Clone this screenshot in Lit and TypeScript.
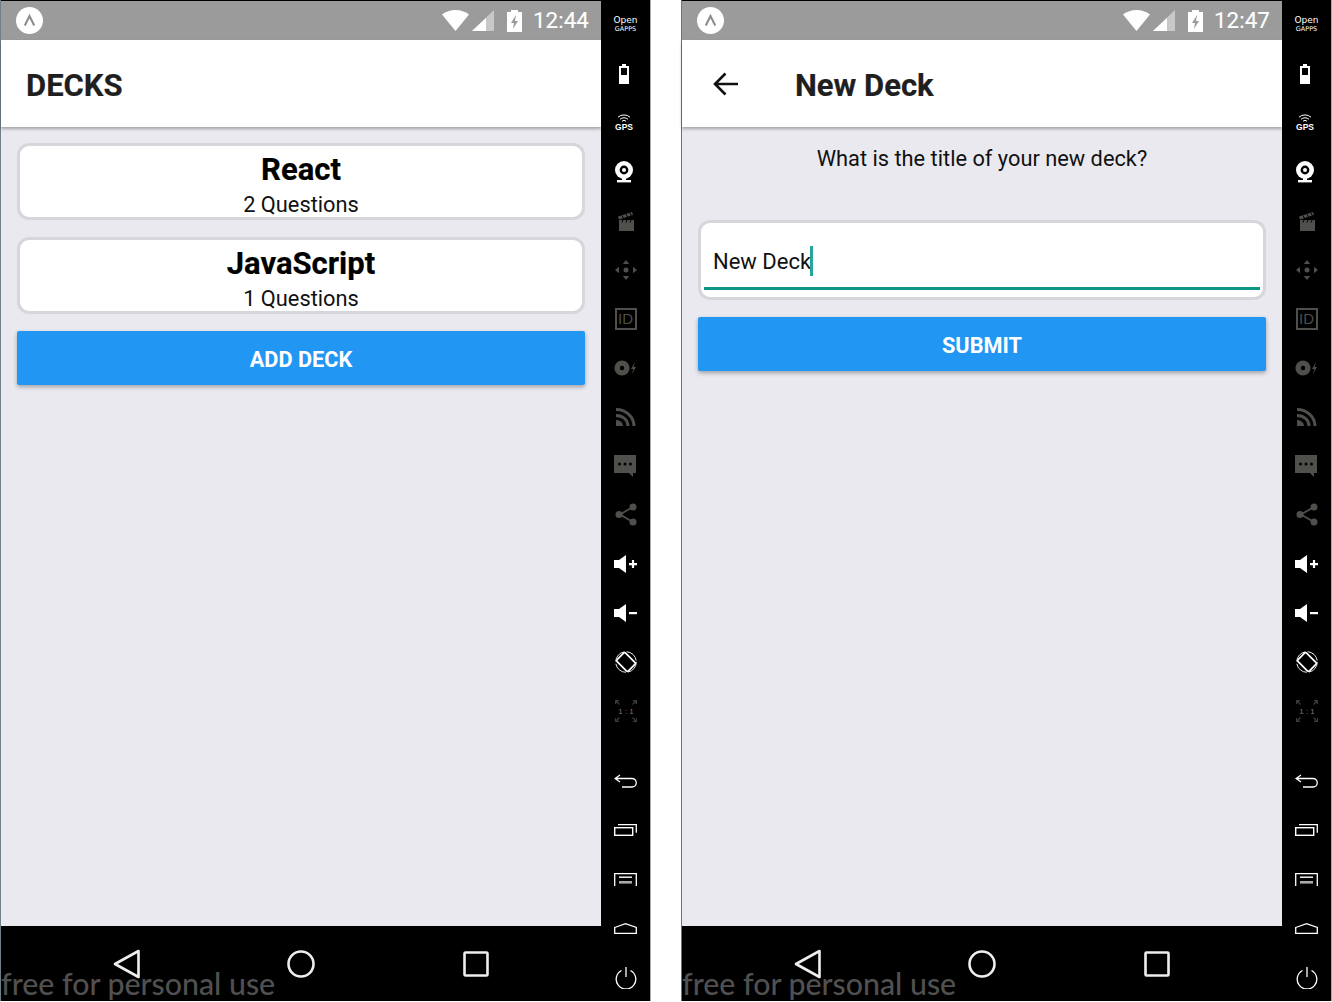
import { LitElement, html, css, svg } from "lit";
import { customElement } from "lit/decorators.js";

const W = "#fff";
const D = "#4f4f4b";

const ic = (w: number, h: number, body: unknown) =>
  html`<svg width=${w} height=${h} viewBox="0 0 ${w} ${h}">${body}</svg>`;

const topIcons = [
  html`<div class="og"><span>Open</span><span class="g">GAPPS</span></div>`,
  html`<div class="shift">${ic(12, 20, svg`<path d="M4 0h4v2h3v18H1V2h3z" fill="${W}"/><rect x="3" y="4" width="6" height="7" fill="#000"/>`)}</div>`,
  html`<div class="gps">${ic(14, 9, svg`<g fill="none" stroke="${W}" stroke-width="1"><path d="M1 3.200a9 9 0 0 1 12 0"/><path d="M3 5.300a6 6 0 0 1 8 0"/><path d="M5 7.200a3 3 0 0 1 4 0"/></g>`)}<span>GPS</span></div>`,
  html`<div class="shift">${ic(20, 22, svg`<circle cx="10" cy="9" r="9" fill="${W}"/><circle cx="10" cy="9" r="4.400" fill="#000"/><circle cx="10" cy="9" r="2" fill="${W}"/><rect x="3" y="19" width="14" height="2.400" fill="${W}"/><rect x="8" y="17" width="4" height="3" fill="${W}"/>`)}</div>`,
  ic(18, 20, svg`<path d="M2 9h15v11H2z" fill="${D}"/><path d="M1 5.500L15 1l1 3L2 8.500z" fill="${D}"/><path d="M5 4.500l1.500 3M9 3.200l1.500 3M13 2l1.500 3M6 9l-1 2.500M10 9l-1 2.500M14 9l-1 2.500" stroke="#000" stroke-width="1"/>`),
  ic(24, 22, svg`<g fill="${D}"><circle cx="12" cy="11" r="2.500"/><path d="M12 1l3.200 4h-6.400zM12 21l3.200-4h-6.400zM1 11l4-3.200v6.400zM23 11l-4-3.200v6.400z"/></g>`),
  html`<div class="id">ID</div>`,
  ic(24, 16, svg`<circle cx="8" cy="8" r="7.600" fill="${D}"/><circle cx="8" cy="8" r="2.200" fill="#000"/><path d="M21 2l-4 7h2.400L18 14l4-7h-2.400z" fill="${D}"/>`),
  ic(20, 20, svg`<g fill="none" stroke="${D}" stroke-width="3"><path d="M0 2.500C10 2.500 18 10 18 19"/><path d="M0 8.500C7 8.500 12 13 12 19"/></g><path d="M0 13c3.500 0 7 2.500 7 6H0z" fill="${D}"/>`),
  html`<div class="down">${ic(23, 23, svg`<path d="M0 0h22v18h-3v4l-4-4H0z" fill="${D}"/><g fill="#000"><circle cx="5.500" cy="9" r="1.500"/><circle cx="11" cy="9" r="1.500"/><circle cx="16.500" cy="9" r="1.500"/></g>`)}</div>`,
  ic(22, 23, svg`<path d="M17 4.500L5 11.500L17 18.500" fill="none" stroke="${D}" stroke-width="1.800"/><circle cx="18" cy="4" r="3.500" fill="${D}"/><circle cx="4" cy="11.500" r="3.500" fill="${D}"/><circle cx="18" cy="19" r="3.500" fill="${D}"/>`),
  ic(24, 18, svg`<path d="M0 5h5l7-5v18l-7-5H0z" fill="${W}"/><path d="M15 8h8v2.200h-8z M17.900 5h2.200v8h-2.200z" fill="${W}"/>`),
  ic(24, 18, svg`<path d="M0 5h5l7-5v18l-7-5H0z" fill="${W}"/><path d="M15 8h8v2.200h-8z" fill="${W}"/>`),
  ic(22, 22, svg`<g fill="none" stroke="${W}"><circle cx="11" cy="11" r="10.300" stroke-width=".9" stroke-dasharray="14 2.300 14 2.300"/><rect x="3" y="5" width="16" height="12" rx="1.500" stroke-width="1.700" transform="rotate(45 11 11)"/></g>`),
  ic(22, 22, svg`<g fill="none" stroke="#3a3a38" stroke-width="1.300"><path d="M.5 4V.5H4M.5.5l4 4M21.500 4V.5H18M21.500.5l-4 4M.5 18v3.500H4M.5 21.500l4-4M21.500 18v3.500H18M21.500 21.500l-4-4"/></g><text x="11" y="14" font-size="8" fill="#777" text-anchor="middle" font-family="Liberation Sans">1 : 1</text>`),
];

const bottomIcons = [
  ic(23, 14, svg`<path d="M6 1L1 4.500L6 8M1 4.500h17a4 4 0 0 1 0 8.500H8" fill="none" stroke="${W}" stroke-width="1.300"/>`),
  ic(23, 12, svg`<path d="M4 .7h18.300v8" fill="none" stroke="${W}" stroke-width="1.300"/><rect x=".7" y="3.700" width="18" height="7.600" fill="none" stroke="${W}" stroke-width="1.400"/>`),
  ic(23, 13, svg`<path d="M.7 13V.7h21.600V13" fill="none" stroke="${W}" stroke-width="1.300"/><rect x="5" y="3.500" width="13" height="1.400" fill="${W}"/><rect x="5" y="8" width="13" height="2.600" fill="#aaa"/>`),
  ic(23, 11, svg`<path d="M.7 4.500L11.500.7l10.800 3.800V10.300H.7z" fill="none" stroke="${W}" stroke-width="1.300"/>`),
  ic(22, 22, svg`<path d="M6.500 3.500a9.800 9.800 0 1 0 9 0M11 0v10" fill="none" stroke="${W}" stroke-width="1.300"/>`),
];

@customElement("app-root")
export class AppRoot extends LitElement {
  static styles = css`
    :host {
      display: block;
      width: 1332px;
      height: 1002px;
      background: #fff;
      font-family: Roboto, sans-serif;
      color: #000;
      overflow: hidden;
    }
    .page { display: flex; gap: 30px; align-items: flex-start; }
    .phone {
      height: 1001px;
      display: flex;
      background: #000;
      flex: none;
      border-left: 1px solid #6f8088;
      border-right: 1px solid #a5aaa8;
      box-sizing: border-box;
      width: 651px;
      position: relative;
    }
    .phone.alt { border-left-color: #3d7ebf; }
    .screen { width: 600px; display: flex; flex-direction: column; height: 1001px; flex: none; }
    .status {
      height: 39px;
      margin-top: 1px;
      background: #9b9b9b;
      display: flex;
      align-items: center;
      padding: 0 12px 0 15px;
      flex: none;
    }
    .expo {
      width: 27px; height: 27px; border-radius: 50%; background: #fff;
      display: flex; align-items: center; justify-content: center;
    }
    .spacer { flex: 1; }
    .status span { display: flex; }
    .wifi { margin-right: 3px; }
    .cell { margin-right: 13px; }
    .batt { margin-right: 11px; }
    .status .time { font-size: 22.300px; color: #fff; line-height: 39px; letter-spacing: .1px; -webkit-text-stroke: .15px #fff; }
    .header {
      height: 87px;
      background: #fff;
      display: flex;
      align-items: center;
      flex: none;
      box-shadow: 0 2px 3px rgba(0,0,0,.3);
      position: relative;
      z-index: 1;
      padding-left: 25px;
      box-sizing: border-box;
    }
    .title { font-size: 31px; font-weight: 700; color: #1f1f1f; margin-top: 3px; -webkit-text-stroke: .2px #1f1f1f; }
    .arrow { margin-left: 6px; margin-right: 56px; display: block; margin-top: 1px; }
    .arrow svg { display: block; }
    .content {
      flex: 1;
      background: #e9e9ef;
      padding: 16px 15px 0 15px;
      display: flex;
      flex-direction: column;
    }
    .card {
      height: 77px;
      margin: 0 1px 17px;
      box-sizing: border-box;
      border: 3px solid #d6d7da;
      border-radius: 12px;
      background: #fff;
      display: flex;
      flex-direction: column;
      align-items: center;
      padding-top: 7px;
    }
    .card h2 { margin: 0; font-size: 31px; font-weight: 700; line-height: 34px; -webkit-text-stroke: .2px #000; }
    .card p { margin: 7px 0 0; font-size: 21.800px; line-height: 22px; color: #111; }
    .btn {
      height: 54px;
      margin: 0 1px;
      background: #2196f3;
      border-radius: 2px;
      box-shadow: 0 2px 4px rgba(0,0,0,.32);
      color: #fff;
      font-size: 21.700px;
      font-weight: 700;
      padding-top: 2px;
      box-sizing: border-box;
      display: flex; align-items: center; justify-content: center;
      flex: none;
    }
    .q { text-align: center; font-size: 21.800px; line-height: 28px; color: #111; height: 57px; margin-top: 2px; margin-bottom: 18px; }
    .input {
      height: 80px;
      margin: 0 1px 17px;
      box-sizing: border-box;
      border: 3px solid #d6d7da;
      border-radius: 12px;
      background: #fff;
      padding: 0 3px;
      display: flex; flex-direction: column;
    }
    .field {
      flex: 1;
      display: flex; align-items: center;
      font-size: 22px;
      padding: 13px 9px 0;
      color: #111;
      border-bottom: 3px solid #0f9583;
      margin-bottom: 7px;
    }
    .caret { width: 2.500px; height: 30px; background: #26a69a; margin-left: -1px; margin-top: -2px; }
    .nav {
      height: 75px;
      background: #000;
      position: relative;
      display: grid;
      grid-template-columns: 250px 100px 250px;
      flex: none;
    }
    .nav > div { display: flex; align-items: center; }
    .n1 { padding-left: 111px; }
    .n2 { justify-content: center; }
    .n3 { padding-left: 112px; }
    .wm {
      position: absolute; left: 0; bottom: 1px;
      font-family: Lato, sans-serif;
      font-size: 30.300px;
      line-height: 34px;
      color: #505050;
      font-weight: 500;
      white-space: nowrap;
    }
    .side {
      width: 49px;
      height: 1001px;
      background: #000;
      flex: none;
      display: flex;
      flex-direction: column;
      align-items: center;
      box-sizing: border-box;
    }
    .slot { height: 49px; display: flex; align-items: center; justify-content: center; flex: none; }
    .slot svg { display: block; }
    .shift { margin-right: 3px; }
    .down { margin-top: 2px; }
    .gap { height: 21px; flex: none; }
    .bslot { height: 49.300px; display: flex; align-items: center; justify-content: center; flex: none; }
    .bslot svg { display: block; }
    .og { display: flex; flex-direction: column; align-items: center; color: #fff; font-family: "DejaVu Sans", sans-serif; font-size: 9px; line-height: 10px; margin-top: -2px; }
    .og .g { font-size: 6.500px; line-height: 8px; }
    .gps { display: flex; flex-direction: column; align-items: center; color: #fff; font-family: "Liberation Sans", sans-serif; font-weight: 700; font-size: 8.500px; line-height: 8px; margin-right: 3px; }
    .id { width: 22px; height: 22px; box-sizing: border-box; border: 2px solid #4f4f4b; color: #4f4f4b; font: 15px/18px "Liberation Sans", sans-serif; text-align: center; }
  `;

  private side() {
    return html`<div class="side">
      ${topIcons.map((i) => html`<div class="slot">${i}</div>`)}
      <div class="gap"></div>
      ${bottomIcons.map((i) => html`<div class="bslot">${i}</div>`)}
    </div>`;
  }

  private status(time: string) {
    return html`<div class="status">
      <div class="expo">${ic(13, 13, svg`<path d="M1.800 11.500L6.500 2l4.700 9.500" fill="none" stroke="#8a8a8a" stroke-width="2"/>`)}</div>
      <div class="spacer"></div>
      <span class="wifi">${ic(27, 21, svg`<path d="M0 4.500C4 1.500 8.500 0 13.500 0s9.500 1.500 13.500 4.500L13.500 21z" fill="#fff"/>`)}</span>
      <span class="cell">${ic(22, 21, svg`<path d="M22 0v21H0z" fill="#c8c8c8"/><path d="M14 8v13H0z" fill="#fff"/>`)}</span>
      <span class="batt">${ic(15, 22, svg`<path d="M4 0h7v2h4v20H0V2h4z" fill="#fff"/><path d="M9 5L4 13h3l-1 6 5-8H8z" fill="#9b9b9b"/>`)}</span>
      <span class="time">${time}</span>
    </div>`;
  }

  private nav() {
    return html`<div class="nav">
      <div class="n1">${ic(28, 30, svg`<path d="M26.500 2L3 15l23.500 13z" fill="none" stroke="#eee" stroke-width="2.600" stroke-linejoin="round"/>`)}</div>
      <div class="n2">${ic(28, 28, svg`<circle cx="14" cy="14" r="12.500" fill="none" stroke="#eee" stroke-width="2.600"/>`)}</div>
      <div class="n3">${ic(26, 26, svg`<rect x="1.500" y="1.500" width="23" height="23" rx="1" fill="none" stroke="#eee" stroke-width="2.600"/>`)}</div>
      <span class="wm">free for personal use</span>
    </div>`;
  }

  render() {
    return html`<div class="page">
      <div class="phone">
        <div class="screen">
          ${this.status("12:44")}
          <div class="header"><span class="title">DECKS</span></div>
          <div class="content">
            <div class="card"><h2>React</h2><p>2 Questions</p></div>
            <div class="card"><h2>JavaScript</h2><p>1 Questions</p></div>
            <div class="btn">ADD DECK</div>
          </div>
          ${this.nav()}
        </div>
        ${this.side()}
      </div>
      <div class="phone alt">
        <div class="screen">
          ${this.status("12:47")}
          <div class="header">
            <span class="arrow">${ic(26, 24, svg`<path d="M25 12H2M12.500 1.500L2 12l10.500 10.500" fill="none" stroke="#111" stroke-width="2.600"/>`)}</span>
            <span class="title">New Deck</span>
          </div>
          <div class="content">
            <div class="q">What is the title of your new deck?</div>
            <div class="input"><div class="field">New Deck<span class="caret"></span></div></div>
            <div class="btn">SUBMIT</div>
          </div>
          ${this.nav()}
        </div>
        ${this.side()}
      </div>
    </div>`;
  }
}
